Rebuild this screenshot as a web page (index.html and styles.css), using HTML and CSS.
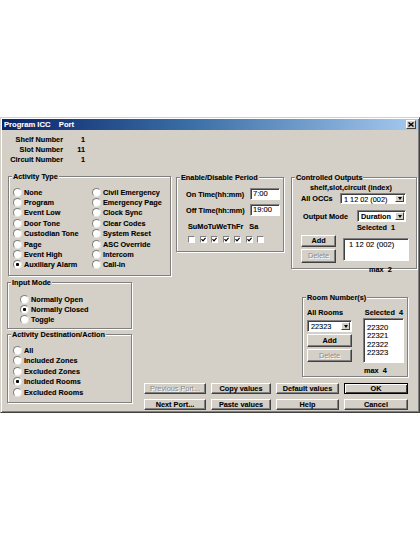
FILE: index.html
```html
<!DOCTYPE html>
<html>
<head>
<meta charset="utf-8">
<link rel="stylesheet" href="styles.css">
</head>
<body>
<div class="page">
  <div class="dialog">
    <div class="titlebar">
      <span class="title">Program ICC&nbsp;&nbsp;&nbsp;&nbsp;Port</span>
      <span class="close"><svg width="6" height="5" viewBox="0 0 6 5"><path d="M0.5 0.5 L5.5 4.5 M5.5 0.5 L0.5 4.5" stroke="#000" stroke-width="1.4" fill="none"/></svg></span>
    </div>

    <div class="info">
      <span class="lbl">Shelf Number</span><span class="val">1</span>
      <span class="lbl">Slot Number</span><span class="val">11</span>
      <span class="lbl">Circuit Number</span><span class="val">1</span>
    </div>

    <div class="toprow">
      <div class="group g-activity">
        <div class="legend">Activity Type</div>
        <div class="radios2">
          <span class="radio">None</span>
          <span class="radio">Program</span>
          <span class="radio">Event Low</span>
          <span class="radio">Door Tone</span>
          <span class="radio">Custodian Tone</span>
          <span class="radio">Page</span>
          <span class="radio">Event High</span>
          <span class="radio on">Auxiliary Alarm</span>
          <span class="radio">Civil Emergency</span>
          <span class="radio">Emergency Page</span>
          <span class="radio">Clock Sync</span>
          <span class="radio">Clear Codes</span>
          <span class="radio">System Reset</span>
          <span class="radio">ASC Override</span>
          <span class="radio">Intercom</span>
          <span class="radio">Call-in</span>
        </div>
      </div>

      <div class="group g-period">
        <div class="legend">Enable/Disable Period</div>
        <div class="times">
          <span>On Time(hh:mm)</span><span class="field tfield">7:00</span>
          <span>Off Time(hh:mm)</span><span class="field tfield">19:00</span>
        </div>
        <div class="days">SuMoTuWeThFr   Sa</div>
        <div class="checks">
          <span class="check"></span>
          <span class="check on"><svg width="5" height="5" viewBox="0 0 5 5"><path d="M0.5 2.2 L2 3.8 L4.6 0.8" stroke="#000" stroke-width="1.2" fill="none"/></svg></span>
          <span class="check on"><svg width="5" height="5" viewBox="0 0 5 5"><path d="M0.5 2.2 L2 3.8 L4.6 0.8" stroke="#000" stroke-width="1.2" fill="none"/></svg></span>
          <span class="check on"><svg width="5" height="5" viewBox="0 0 5 5"><path d="M0.5 2.2 L2 3.8 L4.6 0.8" stroke="#000" stroke-width="1.2" fill="none"/></svg></span>
          <span class="check on"><svg width="5" height="5" viewBox="0 0 5 5"><path d="M0.5 2.2 L2 3.8 L4.6 0.8" stroke="#000" stroke-width="1.2" fill="none"/></svg></span>
          <span class="check on"><svg width="5" height="5" viewBox="0 0 5 5"><path d="M0.5 2.2 L2 3.8 L4.6 0.8" stroke="#000" stroke-width="1.2" fill="none"/></svg></span>
          <span class="check"></span>
        </div>
      </div>

      <div class="group g-outputs">
        <div class="legend">Controlled Outputs</div>
        <div class="sub">shelf,slot,circuit (index)</div>
        <div class="orow r1">
          <span>All OCCs</span>
          <span class="field combo c-occ"><span class="ctext">1 12 02 (002)</span><span class="arrow"></span></span>
        </div>
        <div class="orow r2">
          <span>Output Mode</span>
          <span class="field combo c-mode"><span class="ctext">Duration</span><span class="arrow"></span></span>
        </div>
        <div class="selected s1">Selected&nbsp;&nbsp;1</div>
        <div class="obody">
          <div class="btncol">
            <span class="btn b-add">Add</span>
            <span class="btn b-del disabled">Delete</span>
          </div>
          <div class="field list l-out"><span>1 12 02 (002)</span></div>
        </div>
        <div class="max m1">max&nbsp;&nbsp;2</div>
      </div>
    </div>

    <div class="bottom">
      <div class="leftcol">
        <div class="group g-input">
          <div class="legend">Input Mode</div>
          <div class="radios1">
            <span class="radio">Normally Open</span>
            <span class="radio on">Normally Closed</span>
            <span class="radio">Toggle</span>
          </div>
        </div>
        <div class="group g-dest">
          <div class="legend">Activity Destination/Action</div>
          <div class="radios1">
            <span class="radio">All</span>
            <span class="radio">Included Zones</span>
            <span class="radio">Excluded Zones</span>
            <span class="radio on">Included Rooms</span>
            <span class="radio">Excluded Rooms</span>
          </div>
        </div>
      </div>

      <div class="rightcol">
        <div class="group g-rooms">
          <div class="legend">Room Number(s)</div>
          <div class="rhead"><span>All Rooms</span><span>Selected&nbsp;&nbsp;4</span></div>
          <div class="rbody">
            <div class="btncol">
              <span class="field combo c-room"><span class="ctext">22323</span><span class="arrow"></span></span>
              <span class="btn b-radd">Add</span>
              <span class="btn b-rdel disabled">Delete</span>
            </div>
            <div class="field list l-room">
              <span>22320</span><span>22321</span><span>22322</span><span>22323</span>
            </div>
          </div>
          <div class="max m2">max&nbsp;&nbsp;4</div>
        </div>

        <div class="buttons">
          <span class="btn disabled">Previous Port...</span>
          <span class="btn">Copy values</span>
          <span class="btn">Default values</span>
          <span class="btn default">OK</span>
          <span class="btn">Next Port...</span>
          <span class="btn">Paste values</span>
          <span class="btn">Help</span>
          <span class="btn">Cancel</span>
        </div>
      </div>
    </div>
  </div>
</div>
</body>
</html>
```

FILE: styles.css
```css
* { box-sizing: border-box; }

body {
  margin: 0;
  background: #fff;
  font-family: "Liberation Sans", Arial, sans-serif;
  font-weight: bold;
  font-size: 7.3px;
  color: #000;
  -webkit-text-stroke: 0.1px #000;
}

.page { padding-top: 117px; }

.dialog {
  width: 420px;
  height: 296px;
  background: #d4d0c8;
  border: 1px solid;
  border-color: #d4d0c8 #404040 #404040 #d4d0c8;
  box-shadow: inset 1px 1px #fff, inset -1px -1px #808080;
}

/* title bar */
.titlebar {
  margin: 1px 1px 0 1px;
  height: 11px;
  background: linear-gradient(90deg, #0a246a 0%, #3a6ea5 45%, #a6caf0 100%);
  display: flex;
  align-items: center;
  justify-content: space-between;
  padding: 0 2px 0 2px;
}
.title { color: #fff; font-size: 7.6px; line-height: 11px; -webkit-text-stroke: 0.1px #fff; }
.close {
  width: 10px;
  height: 9px;
  background: #d4d0c8;
  border: 1px solid;
  border-color: #fff #404040 #404040 #fff;
  display: flex;
  align-items: center;
  justify-content: center;
}
.close svg { display: block; }

/* info */
.info {
  margin-top: 5px;
  display: grid;
  grid-template-columns: 62px 22px;
  line-height: 10px;
}
.info .lbl { text-align: right; }
.info .val { text-align: right; }

/* groups */
.group {
  border: 1px solid #808080;
  box-shadow: 1px 1px 0 #fff, inset 1px 1px 0 #fff;
}
.legend {
  width: fit-content;
  margin: -5px 0 0 3px;
  padding: 0 1px;
  line-height: 9px;
  background: #d4d0c8;
}

/* radios */
.radio {
  display: flex;
  align-items: center;
  white-space: nowrap;
}
.radio::before {
  content: "";
  flex: none;
  width: 7px;
  height: 7px;
  margin-right: 2px;
  border-radius: 50%;
  border: 1px solid;
  border-color: #808080 #e8e6e0 #e8e6e0 #808080;
  background: #fff;
}
.radio.on::before {
  background: radial-gradient(circle, #000 0 1.3px, #fff 1.8px);
}

/* top row */
.toprow {
  display: flex;
  align-items: flex-start;
  margin-top: 11px;
}

.g-activity {
  margin-left: 7px;
  width: 163px;
  height: 100px;
}
.radios2 {
  margin: 6px 0 0 4px;
  display: grid;
  grid-auto-flow: column;
  grid-template-rows: repeat(8, 10.4px);
  grid-template-columns: 79px auto;
}

.g-period {
  margin: 1px 0 0 5px;
  width: 108px;
  height: 75px;
}
.times {
  margin: 6px 0 0 9px;
  display: grid;
  grid-template-columns: 64px 30px;
  grid-template-rows: 12px 12px;
  row-gap: 4px;
  align-items: center;
}
.field {
  background: #fff;
  border: 1px solid;
  border-color: #808080 #fff #fff #808080;
  box-shadow: inset 1px 1px #404040;
}
.tfield {
  height: 12px;
  padding-left: 2px;
  font-weight: normal;
  font-size: 7.6px;
  line-height: 10px;
}
.days {
  margin: 7px 0 0 11px;
  line-height: 8px;
  white-space: pre;
}
.checks {
  margin: 5px 0 0 11px;
  display: grid;
  grid-template-columns: repeat(7, 11.5px);
}
.check {
  width: 7px;
  height: 7px;
  background: #fff;
  border: 1px solid;
  border-color: #808080 #fff #fff #808080;
  display: flex;
  align-items: center;
  justify-content: center;
}
.check svg { display: block; }

.g-outputs {
  margin: 1px 0 0 7px;
  width: 126px;
  height: 92px;
}
.sub { margin: 2px 0 0 18px; line-height: 8px; }
.orow {
  display: flex;
  align-items: center;
  justify-content: space-between;
  height: 11px;
}
.r1 { margin: 1px 10px 0 9px; }
.r2 { margin: 6px 10px 0 11px; height: 12px; }
.combo {
  display: flex;
  align-items: stretch;
  height: 100%;
  padding: 1px;
  flex: none;
}
.ctext {
  flex: 1;
  padding-left: 2px;
  line-height: 9px;
  font-size: 7.3px;
  white-space: nowrap;
}
.c-occ { width: 66px; font-weight: normal; }
.c-mode { width: 49px; }
.arrow {
  flex: none;
  width: 9px;
  background: #d4d0c8;
  border: 1px solid;
  border-color: #fff #404040 #404040 #fff;
  display: flex;
  align-items: center;
  justify-content: center;
}
.arrow::after {
  content: "";
  border-left: 2.5px solid transparent;
  border-right: 2.5px solid transparent;
  border-top: 3px solid #000;
}
.selected { margin: 2px 0 0 65px; line-height: 8px; }
.obody {
  display: flex;
  align-items: flex-start;
  margin: 0 0 0 9px;
}
.btncol { display: flex; flex-direction: column; }
.btn {
  height: 11px;
  background: #d4d0c8;
  border: 1px solid;
  border-color: #fff #404040 #404040 #fff;
  box-shadow: inset -1px -1px #808080;
  display: flex;
  align-items: center;
  justify-content: center;
  white-space: nowrap;
  line-height: 8px;
}
.btn.disabled { color: #8c8a86; text-shadow: 1px 1px #fff; font-weight: normal; -webkit-text-stroke: 0; }
.btn.default { border-color: #000; box-shadow: inset 1px 1px #fff, inset -1px -1px #404040; }
.b-add { width: 35px; margin-top: 3px; height: 12px; }
.b-del { width: 35px; margin-top: 2px; height: 14px; }
.l-out {
  margin: 6px 0 0 7px;
  width: 66px;
  height: 23px;
  padding: 1px 0 0 5px;
  font-weight: normal;
  font-size: 7.6px;
  line-height: 9px;
}
.max { line-height: 8px; }
.m1 { margin: 3px 0 0 77px; }

/* bottom */
.bottom { display: flex; align-items: flex-start; }
.leftcol { margin-left: 6px; width: 125px; display: flex; flex-direction: column; }
.g-input { margin-top: 6px; height: 47px; }
.g-input .radios1 { margin: 7px 0 0 12px; }
.radios1 { display: grid; grid-auto-rows: 10.2px; }
.g-dest { margin-top: 5px; height: 69px; }
.g-dest .radios1 { margin: 6px 0 0 5px; grid-auto-rows: 10.5px; }

.rightcol { margin-left: 1px; display: flex; flex-direction: column; }
.g-rooms {
  margin: 21px 0 0 169px;
  width: 106px;
  height: 80px;
}
.rhead {
  display: flex;
  justify-content: space-between;
  margin: 7px 4px 0 4px;
  line-height: 8px;
}
.rbody { display: flex; margin: 0 0 0 4px; align-items: flex-start; }
.c-room { width: 45px; height: 12px; margin-top: 3px; font-weight: normal; }
.b-radd { width: 45px; height: 13px; margin-top: 2px; }
.b-rdel { width: 45px; height: 13px; margin-top: 2px; }
.l-room {
  margin: 1px 0 0 11px;
  width: 41px;
  height: 45px;
  padding: 5px 0 0 3px;
  display: flex;
  flex-direction: column;
  font-weight: normal;
  font-size: 7.6px;
  line-height: 8.4px;
}
.m2 { margin: 4px 0 0 61px; }

.buttons {
  margin: 6px 0 0 11px;
  display: grid;
  grid-template-columns: 62px 60px 63px 64px;
  grid-template-rows: 11px 11px;
  column-gap: 5px;
  row-gap: 5px;
}
```
